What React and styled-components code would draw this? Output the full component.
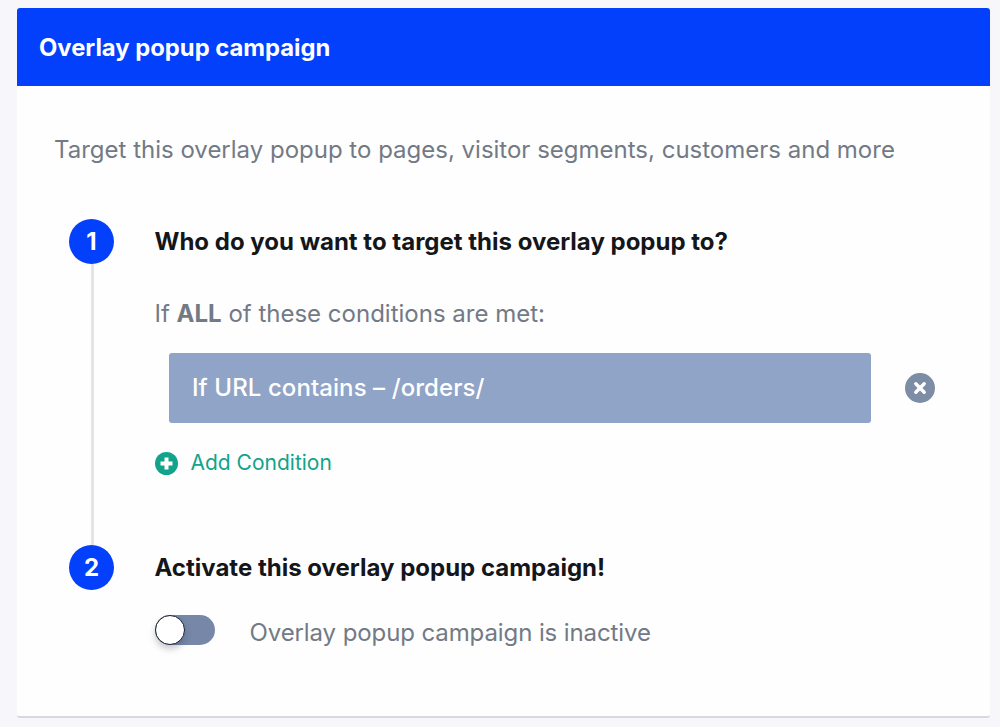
import React from 'react'
import styled, { createGlobalStyle } from 'styled-components'

const GlobalStyle = createGlobalStyle`
  html, body {
    margin: 0;
    background: #f7f7fb;
    font-family: Inter, "Liberation Sans", sans-serif;
  }
`

const Card = styled.section`
  box-sizing: border-box;
  width: 973px;
  height: 710px;
  margin: 8px 0 0 17px;
  background: #fefefe;
  border-radius: 3px;
  border-bottom: 2px solid #d8d9e0;
`

const Header = styled.header`
  box-sizing: border-box;
  height: 78px;
  padding-left: 22px;
  display: flex;
  align-items: center;
  background: #0340fc;
  border-radius: 3px 3px 0 0;
  color: #fff;
  font-size: 23.8px;
  font-weight: 700;
`

const Body = styled.div`
  padding: 48px 55px 0 37px;
`

const Description = styled.p`
  margin: 0 0 53px;
  color: #727a85;
  font-size: 24px;
  line-height: 32px;
`

const Step = styled.div`
  display: grid;
  grid-template-columns: 45px 1fr;
  column-gap: 40.5px;
  margin-left: 15px;
  height: ${({ $height }) => $height}px;
`

const Rail = styled.div`
  display: flex;
  flex-direction: column;
  align-items: center;
`

const Bubble = styled.div`
  flex: none;
  width: 45px;
  height: 45px;
  border-radius: 50%;
  background: #0340fc;
  color: #fff;
  display: flex;
  align-items: center;
  justify-content: center;
  font-size: 24px;
  font-weight: 700;
`

const Line = styled.div`
  flex: 1;
  width: 3.5px;
  margin-left: 2px;
  background: #e4e4e8;
`

const Content = styled.div`
  display: flex;
  flex-direction: column;
  align-items: flex-start;
`

const StepTitle = styled.h2`
  margin: 0;
  height: 45px;
  display: flex;
  align-items: center;
  color: #14161a;
  font-size: 24px;
  font-weight: 700;
`

const ConditionLabel = styled.p`
  margin: 34px 0 23px;
  color: #727a85;
  font-size: 24px;
  line-height: 32px;
  b {
    font-weight: 700;
  }
`

const ConditionRow = styled.div`
  display: flex;
  align-items: center;
  margin-left: 14.5px;
  gap: 34px;
`

const Condition = styled.div`
  box-sizing: border-box;
  width: 702px;
  height: 70px;
  padding: 0 0 2px 23px;
  display: flex;
  align-items: center;
  background: #8fa4c6;
  border-radius: 3px;
  color: #fff;
  font-size: 24px;
  font-weight: 500;
  letter-spacing: 0.08px;
`

const RemoveButton = styled.button`
  width: 30px;
  height: 30px;
  padding: 0;
  border: none;
  border-radius: 50%;
  background: #7c8da5;
  display: flex;
  align-items: center;
  justify-content: center;
`

const AddButton = styled.button`
  margin-top: 27px;
  padding: 0;
  border: none;
  background: none;
  display: flex;
  align-items: center;
  gap: 13px;
  color: #12a38a;
  font-family: inherit;
  font-size: 21px;
  line-height: 26px;
`

const ToggleRow = styled.div`
  display: flex;
  align-items: center;
  gap: 35px;
  margin-top: 21px;
`

const Toggle = styled.div`
  position: relative;
  width: 60px;
  height: 30px;
  border-radius: 15px;
  background: #7687a8;
`

const Knob = styled.span`
  position: absolute;
  left: 0;
  top: 0;
  box-sizing: border-box;
  width: 30px;
  height: 30px;
  border-radius: 50%;
  background: #fff;
  border: 1.5px solid #1b2030;
  box-shadow: 0 4px 6px rgba(30, 40, 60, 0.25);
`

const ToggleLabel = styled.span`
  padding-top: 6px;
  color: #727a85;
  font-size: 24px;
  line-height: 32px;
  letter-spacing: -0.1px;
`

const CloseIcon = () => (
  <svg width="14" height="14" viewBox="0 0 14 14">
    <path d="M2.8 2.8l8.4 8.4M11.2 2.8l-8.4 8.4" stroke="#fff" strokeWidth="3.4" strokeLinecap="round" />
  </svg>
)

const PlusIcon = () => (
  <svg width="23" height="23" viewBox="0 0 23 23">
    <circle cx="11.5" cy="11.5" r="11.5" fill="#12a38a" />
    <path d="M11.5 5.5v12M5.5 11.5h12" stroke="#fff" strokeWidth="4" />
  </svg>
)

export default function App() {
  return (
    <>
      <GlobalStyle />
      <Card>
        <Header>Overlay popup campaign</Header>
        <Body>
          <Description>Target this overlay popup to pages, visitor segments, customers and more</Description>
          <Step $height={326}>
            <Rail>
              <Bubble>1</Bubble>
              <Line />
            </Rail>
            <Content>
              <StepTitle>Who do you want to target this overlay popup to?</StepTitle>
              <ConditionLabel>If <b>ALL</b> of these conditions are met:</ConditionLabel>
              <ConditionRow>
                <Condition>If URL contains – /orders/</Condition>
                <RemoveButton aria-label="Remove condition"><CloseIcon /></RemoveButton>
              </ConditionRow>
              <AddButton><PlusIcon />Add Condition</AddButton>
            </Content>
          </Step>
          <Step $height={100}>
            <Rail>
              <Bubble>2</Bubble>
            </Rail>
            <Content>
              <StepTitle>Activate this overlay popup campaign!</StepTitle>
              <ToggleRow>
                <Toggle><Knob /></Toggle>
                <ToggleLabel>Overlay popup campaign is inactive</ToggleLabel>
              </ToggleRow>
            </Content>
          </Step>
        </Body>
      </Card>
    </>
  )
}
